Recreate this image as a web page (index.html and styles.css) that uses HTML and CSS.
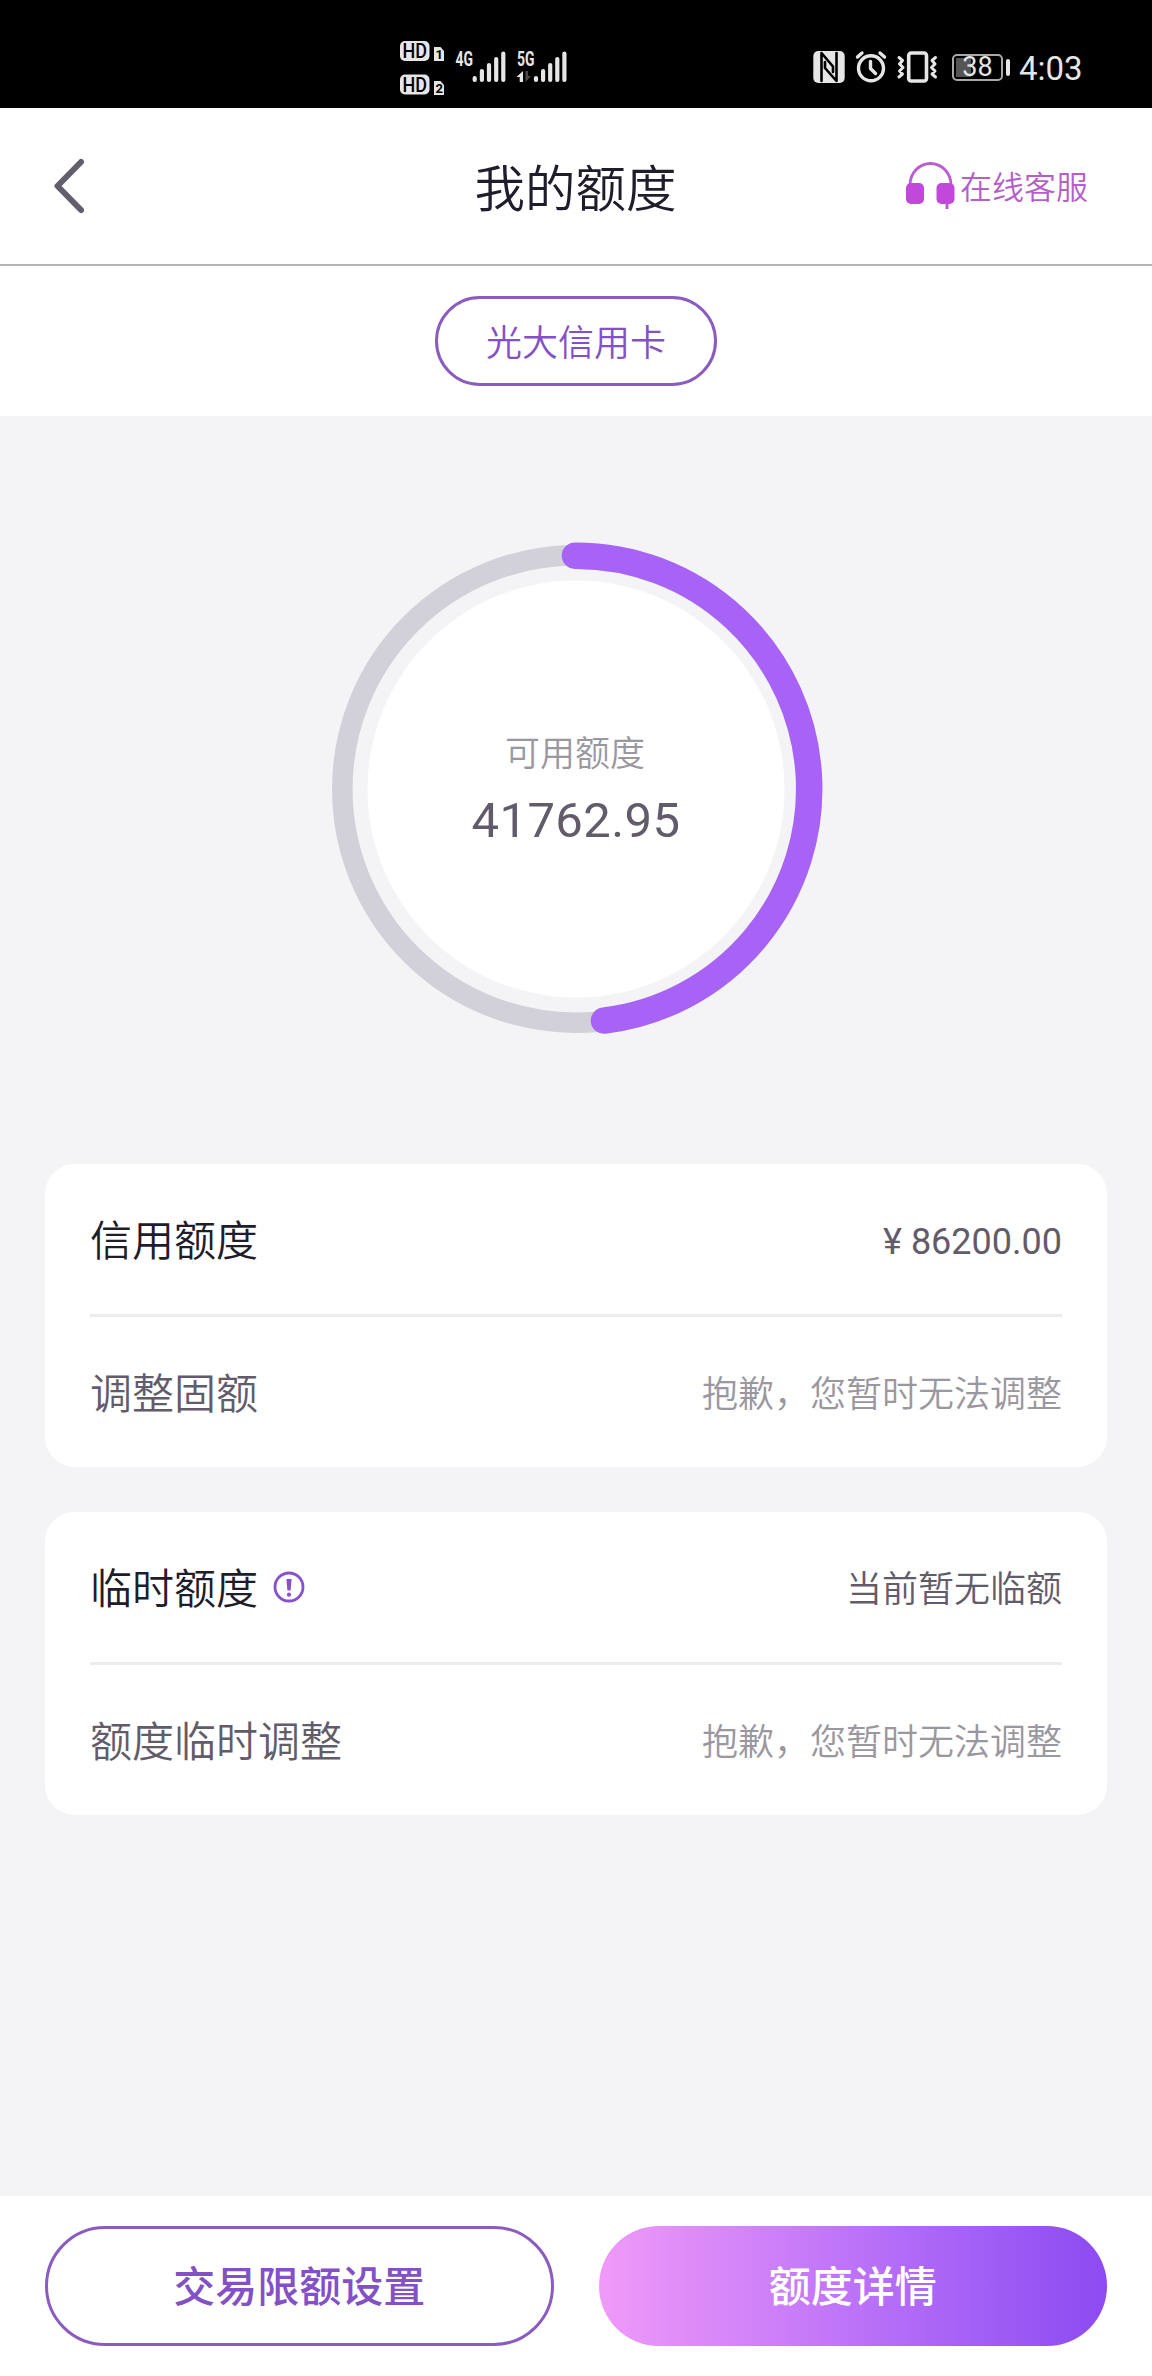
FILE: index.html
```html
<!DOCTYPE html>
<html lang="zh-CN">
<head>
<meta charset="utf-8">
<title>我的额度</title>
<link rel="stylesheet" href="styles.css">
</head>
<body>
<div class="status">
  <svg class="signals" width="176" height="60" viewBox="396 40 176 60">
    <g fill="#e6e6e6">
      <rect x="400" y="41" width="29.500" height="20" rx="5"/>
      <path d="M434 61V47h6.500l3.500 4v10z"/>
      <rect x="400" y="74.500" width="29.500" height="20" rx="5"/>
      <path d="M434 95V81h6.500l3.500 4v10z"/>
    </g>
    <g class="hd" fill="#000">
      <text x="402.500" y="58" textLength="24.500" lengthAdjust="spacingAndGlyphs">HD</text>
      <text x="402.500" y="91.500" textLength="24.500" lengthAdjust="spacingAndGlyphs">HD</text>
      <text class="sim" x="435.500" y="59">1</text>
      <text class="sim" x="435.500" y="93">2</text>
    </g>
    <g class="net" fill="#e6e6e6">
      <text x="455.500" y="65.500" textLength="17.500" lengthAdjust="spacingAndGlyphs">4G</text>
      <text x="517" y="65.500" textLength="17.500" lengthAdjust="spacingAndGlyphs">5G</text>
    </g>
    <path d="M474.700 80v-2M481.900 80V71M489 80V65M496.200 80V59M503.300 80V53.500M536 80v-2M543.100 80V71M550.200 80V65M557.300 80V59M564.400 80V53.500" fill="none" stroke="#e6e6e6" stroke-width="4.200" stroke-linecap="round"/>
    <path d="M523 71v11h-3.300v-5H516.500z" fill="#e6e6e6"/>
    <path d="M525.500 71v11l5.500-6h-3v-5z" fill="#4a4a4a"/>
  </svg>
  <div class="status-right">
    <svg width="126" height="36" viewBox="812 49 126 36" fill="none" stroke="#e6e6e6" stroke-linecap="round" stroke-linejoin="round">
      <rect x="813.300" y="51" width="31.400" height="32" rx="5" fill="#e6e6e6" stroke="none"/>
      <path d="M821.500 81V53L833 66.500V72M836.500 53V81L825 68V62" stroke="#000" stroke-width="2.600"/>
      <circle cx="871" cy="68.300" r="12.500" stroke-width="3.400"/>
      <path d="M870.500 61.500V68.500L875.500 73.500" stroke-width="3.400"/>
      <path d="M857.500 57L862 53M884.500 57L880 53" stroke-width="3.400"/>
      <rect x="908.700" y="53" width="17.800" height="28" rx="2.500" stroke-width="3.600"/>
      <path d="M899 57.500L902.500 60.500L899.500 64L903 67.500L899.500 71L902.500 74L899 77M935.500 57.500L932 60.500L935 64L931.500 67.500L935 71L932 74L935.500 77" stroke-width="3"/>
    </svg>
    <div class="battery"><span class="charge"></span><span class="percent">38</span></div>
    <span class="battery-tip"></span>
    <span class="clock">4:03</span>
  </div>
</div>

<header class="header">
  <svg class="back" width="30" height="56" viewBox="54 158 30 56" fill="none" stroke="#645e6c" stroke-width="6" stroke-linecap="round" stroke-linejoin="round"><path d="M81 162L57.500 186L81 210"/></svg>
  <h1 class="title">我的额度</h1>
  <div class="service">
    <svg width="49" height="48" viewBox="907 162 49 48">
      <path d="M911 185A20.500 21.500 0 0 1 952 185" fill="none" stroke="#bd5bd0" stroke-width="2.800"/>
      <rect x="907" y="183" width="18" height="21" rx="5" fill="#c248dc"/>
      <rect x="937.500" y="183" width="18" height="21" rx="5" fill="#c248dc"/>
      <path d="M948 203v6" stroke="#bd5bd0" stroke-width="3"/>
    </svg>
    <span class="service-text">在线客服</span>
  </div>
</header>

<nav class="tabs"><span class="pill">光大信用卡</span></nav>

<main class="main">
  <section class="gauge">
    <svg class="ring" width="496" height="496" viewBox="-248 -248 496 496" fill="none">
      <circle r="233.700" stroke="#d2d0d8" stroke-width="20.500"/>
      <circle r="208.500" fill="#fff"/>
      <path d="M-1 -233.300A233.300 233.300 0 0 1 28 231.600" stroke="#a762f6" stroke-width="26.500" stroke-linecap="round"/>
    </svg>
    <div class="gauge-text">
      <div class="gauge-label">可用额度</div>
      <div class="gauge-value">41762.95</div>
    </div>
  </section>

  <section class="card">
    <div class="row"><span class="label strong">信用额度</span><span class="value amount">¥ 86200.00</span></div>
    <div class="divider"></div>
    <div class="row"><span class="label">调整固额</span><span class="value muted">抱歉，您暂时无法调整</span></div>
  </section>

  <section class="card">
    <div class="row">
      <span class="label strong">临时额度</span>
      <svg class="info" width="32" height="32" viewBox="-16 -16 32 32"><circle r="14" fill="none" stroke="#8751cc" stroke-width="2.800"/><path d="M-2.600 -8H2.600L1.600 3.500H-1.600z" fill="#8751cc"/><circle cy="7.700" r="2.100" fill="#8751cc"/></svg>
      <span class="value">当前暂无临额</span>
    </div>
    <div class="divider"></div>
    <div class="row"><span class="label">额度临时调整</span><span class="value muted">抱歉，您暂时无法调整</span></div>
  </section>
</main>

<footer class="footer">
  <button class="btn outline">交易限额设置</button>
  <button class="btn filled">额度详情</button>
</footer>
</body>
</html>
```
FILE: styles.css
```css
* { box-sizing: border-box; }
body {
  margin: 0;
  width: 1152px;
  height: 2376px;
  display: flex;
  flex-direction: column;
  background: #f4f4f6;
  font-family: Roboto, "Noto Sans CJK SC", sans-serif;
  color: #625c6a;
}
svg { display: block; flex: none; }

.status {
  height: 108px;
  background: #000;
  display: flex;
  justify-content: space-between;
  padding: 40px 70px 0 396px;
}
.hd { font: 500 20px Roboto, sans-serif; }
.hd .sim { font-size: 13px; font-weight: 700; }
.net { font: 700 19.5px Roboto, sans-serif; }
.status-right {
  display: flex;
  align-items: center;
  height: 36px;
  margin-top: 9px;
}
.battery {
  width: 51px;
  height: 27px;
  margin-left: 14px;
  border: 2px solid #a9a9a9;
  border-radius: 5px;
  display: grid;
  align-items: center;
  color: #e6e6e6;
}
.battery > span { grid-area: 1 / 1; }
.charge {
  width: 15px;
  height: 19px;
  margin-left: 2px;
  background: #555;
}
.percent {
  font-size: 27px;
  line-height: 23px;
  text-align: center;
}
.battery-tip {
  width: 4px;
  height: 17px;
  margin-left: 3px;
  border-radius: 2px;
  background: #e6e6e6;
}
.clock {
  width: 72px;
  padding-left: 9px;
  font-size: 33px;
  line-height: 36px;
  margin-top: 3px;
  color: #e6e6e6;
}

.header {
  height: 158px;
  background: #fff;
  border-bottom: 2px solid #b4b4b4;
  display: grid;
  grid-template-columns: 1fr auto 1fr;
  align-items: center;
  padding: 0 64px 0 54px;
}
.title {
  margin: 7px 0 0 9px;
  font-size: 50.5px;
  line-height: 60px;
  font-weight: 350;
  color: #201c2a;
}
.service {
  justify-self: end;
  display: flex;
  align-items: center;
  gap: 5px;
}
.service-text {
  padding-top: 3px;
  font-size: 32px;
  line-height: 40px;
  color: #b65fc8;
  font-weight: 350;
}

.tabs {
  height: 150px;
  padding-top: 30px;
  background: #fff;
  display: flex;
  justify-content: center;
  align-items: flex-start;
}
.pill {
  width: 282px;
  height: 90px;
  border: 3px solid #8a5cc0;
  border-radius: 45px;
  font-size: 36px;
  line-height: 90px;
  font-weight: 350;
  text-align: center;
  color: #8350c6;
}

.main {
  flex: 1;
  padding: 0 45px;
}
.gauge {
  height: 748px;
  padding-top: 125px;
  display: grid;
  justify-items: center;
  align-items: start;
}
.ring, .gauge-text { grid-area: 1 / 1; }
.gauge-text {
  padding-top: 187px;
  text-align: center;
}
.gauge-label {
  font-size: 35px;
  line-height: 54px;
  margin-right: 2px;
  font-weight: 350;
  color: #9a979f;
}
.gauge-value {
  font-size: 49px;
  line-height: 60px;
  margin-top: 9px;
  letter-spacing: 0.4px;
}

.card {
  height: 303px;
  padding: 0 45px;
  margin-bottom: 45px;
  border-radius: 30px;
  background: #fff;
}
.row {
  height: 150px;
  padding-top: 5px;
  display: flex;
  align-items: center;
  font-weight: 350;
}
.divider {
  height: 3px;
  background: #ececee;
}
.label {
  font-size: 42px;
  line-height: 60px;
}
.strong { color: #201c2a; }
.info { margin: 0 0 6px 15px; }
.value {
  margin-left: auto;
  font-size: 36px;
  line-height: 54px;
}
.amount { font-weight: 400; }
.muted { color: #9a979f; }

.footer {
  height: 180px;
  padding: 30px 45px;
  background: #fff;
  display: grid;
  grid-template-columns: 1fr 1fr;
  gap: 45px;
}
.btn {
  height: 120px;
  padding: 0;
  border: 0;
  border-radius: 60px;
  font: 500 42px/124px Roboto, "Noto Sans CJK SC", sans-serif;
}
.outline {
  border: 3px solid #8a5cc0;
  background: #fff;
  color: #8350c6;
  line-height: 118px;
}
.filled {
  background: linear-gradient(90deg, #f09af8, #c77bf8 40%, #a763f6 70%, #8c4af1);
  color: #fff;
}
```
